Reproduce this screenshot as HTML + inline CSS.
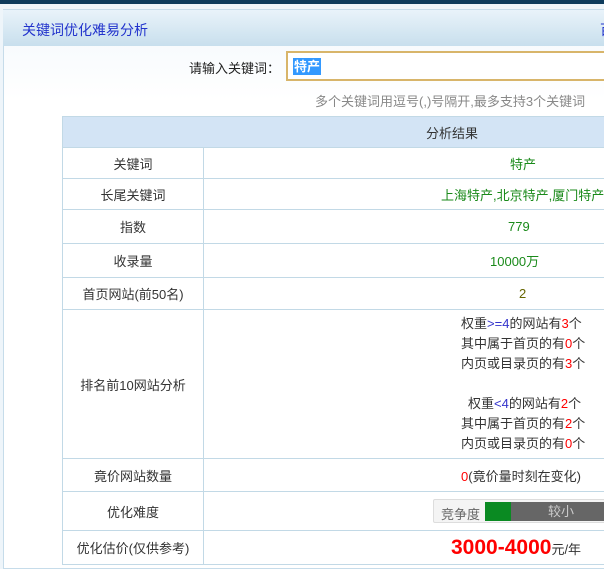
<!DOCTYPE html>
<html><head><meta charset="utf-8"><style>
*{margin:0;padding:0;box-sizing:border-box}
body{width:604px;height:556px;overflow:hidden;background:#eef5fa;font-family:"Liberation Sans","Noto Sans CJK SC",sans-serif;font-size:13px;color:#333;position:relative}
.top{position:absolute;left:0;top:0;width:604px;height:4px;background:#0d3b5c}
.panel{position:absolute;left:3px;top:9px;width:601px;height:560px;border:1px solid #c6dcea;border-right:none;background:linear-gradient(#f2f8fc 0,#fff 90px,#fff 100%)}
.hd{position:absolute;left:3px;top:10px;width:601px;height:36px;background:linear-gradient(#e9f3fa,#c8dfed);}
.hd span{position:absolute;left:19px;top:10px;color:#2233cc;font-size:14px}
.hd b{position:absolute;left:597px;top:10px;color:#2233cc;font-weight:normal;font-size:14px}
.lab{position:absolute;left:189px;top:58px;font-size:13px;color:#222}
.inp{position:absolute;left:286px;top:51px;width:318px;height:30px;border:2px solid #d8b56a;border-right:none;background:#fff}
.inp span{position:absolute;left:5px;top:5px;background:#3399ff;color:#fff;font-weight:bold;font-size:13px;line-height:17px;padding:0 1px}
.tip{position:absolute;left:315px;top:91px;color:#888;font-size:13px}
table{position:absolute;left:62px;top:116px;width:560px;border-collapse:collapse;font-size:13px;table-layout:fixed}
td,th{border:1px solid #c2d9e6;text-align:center;font-weight:normal;white-space:nowrap;overflow:hidden}
td.v{text-align:left}
th{background:#d3e4f5;height:31px;color:#333}
.g{color:#1a8a1a}.r{color:#f00}.b{color:#33c}
.rank{line-height:20px;padding-left:257px}
.bar{display:inline-block;width:200px;height:24px;border:1px solid #ddd;border-radius:2px;background:#f4f4f4;margin-left:229px;vertical-align:middle;position:relative}
.bar i{position:absolute;left:7px;top:4px;font-style:normal;color:#666}
.bar em{position:absolute;left:51px;top:2px;width:26px;height:19px;background:#0a8a22}
.bar u{position:absolute;left:77px;top:2px;width:120px;height:19px;background:#666;color:#ccc;text-decoration:none;padding-left:37px;line-height:19px}
.price{color:#f00;font-weight:bold;font-size:21px}
</style></head><body>
<div class="top"></div>
<div class="panel"></div>
<div class="hd"><span>关键词优化难易分析</span><b>百</b></div>
<div class="lab">请输入关键词：</div>
<div class="inp"><span>特产</span></div>
<div class="tip">多个关键词用逗号(,)号隔开,最多支持3个关键词</div>
<table>
<colgroup><col style="width:141px"><col style="width:419px"></colgroup>
<tr><th colspan="2" style="text-align:left;padding-left:363px">分析结果</th></tr>
<tr style="height:31px"><td>关键词</td><td class="v g" style="padding-left:306px">特产</td></tr>
<tr style="height:31px"><td>长尾关键词</td><td class="v g" style="padding-left:237px">上海特产,北京特产,厦门特产</td></tr>
<tr style="height:34px"><td>指数</td><td class="v g" style="padding-left:304px">779</td></tr>
<tr style="height:34px"><td>收录量</td><td class="v g" style="padding-left:286px">10000万</td></tr>
<tr style="height:32px"><td>首页网站(前50名)</td><td class="v" style="color:#666600;padding-left:315px">2</td></tr>
<tr style="height:149px"><td>排名前10网站分析</td><td class="v"><div class="rank">
<div>权重<span class="b">&gt;=4</span>的网站有<span class="r">3</span>个</div>
<div>其中属于首页的有<span class="r">0</span>个</div>
<div>内页或目录页的有<span class="r">3</span>个</div>
<div>&nbsp;</div>
<div style="padding-left:7px">权重<span class="b">&lt;4</span>的网站有<span class="r">2</span>个</div>
<div>其中属于首页的有<span class="r">2</span>个</div>
<div>内页或目录页的有<span class="r">0</span>个</div></div></td></tr>
<tr style="height:33px"><td>竟价网站数量</td><td class="v" style="padding-left:257px"><span class="r">0</span>(竟价量时刻在变化)</td></tr>
<tr style="height:39px"><td>优化难度</td><td class="v"><span class="bar"><i>竞争度</i><em></em><u>较小</u></span></td></tr>
<tr style="height:34px"><td>优化估价(仅供参考)</td><td class="v" style="padding-left:247px"><span class="price">3000-4000</span>元/年</td></tr>
</table>
</body></html>
